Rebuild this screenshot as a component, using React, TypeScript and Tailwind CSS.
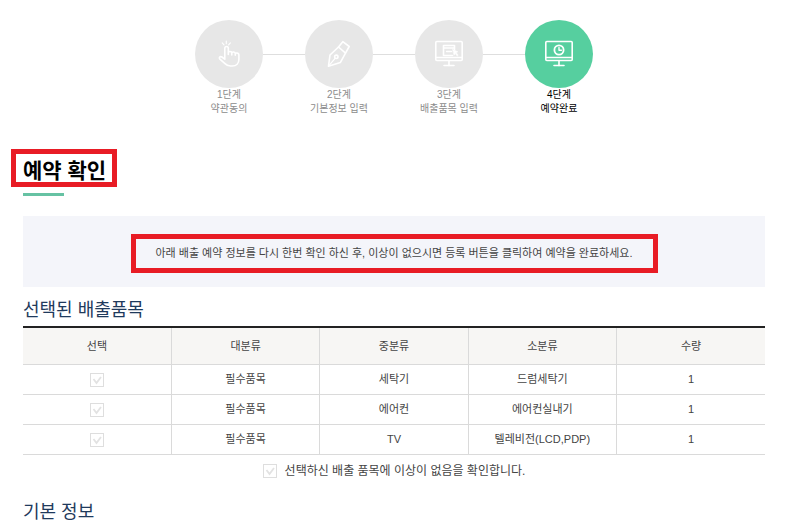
import type { ReactNode } from "react";

const steps = [
  { step: "1단계", label: "약관동의", icon: <TouchIcon /> },
  { step: "2단계", label: "기본정보 입력", icon: <PenIcon /> },
  { step: "3단계", label: "배출품목 입력", icon: <MonitorDocIcon /> },
  { step: "4단계", label: "예약완료", icon: <MonitorClockIcon />, active: true },
];

const columns = ["선택", "대분류", "중분류", "소분류", "수량"];

const items = [
  { large: "필수품목", middle: "세탁기", small: "드럼세탁기", count: 1 },
  { large: "필수품목", middle: "에어컨", small: "에어컨실내기", count: 1 },
  { large: "필수품목", middle: "TV", small: "텔레비전(LCD,PDP)", count: 1 },
];

function IconBase({ children }: { children: ReactNode }) {
  return (
    <svg
      className="h-[30px] w-[30px]"
      viewBox="0 0 30 30"
      fill="none"
      stroke="white"
      strokeWidth={1.6}
      strokeLinecap="round"
      strokeLinejoin="round"
      aria-hidden="true"
    >
      {children}
    </svg>
  );
}

function TouchIcon() {
  return (
    <IconBase>
      <path d="M12.3 2v2.8M8.2 3.8l1.8 2M16.4 3.8l-1.8 2" strokeWidth={1.1} />
      <path d="M10.8 20.2V9.2a1.6 1.6 0 0 1 3.5 0v6.3M14.3 13.6c0-1.6 3.5-1.6 3.5.3v2M17.8 13.9c.2-1.4 3.5-1.2 3.5.6v1.8M21.3 14.8c.5-1.2 3.6-.9 3.6 1v4.4c0 4-2.6 6.8-6.6 6.8h-1.8c-2.6 0-4.2-.9-5.8-2.6l-4.8-4.2c-1.5-1.6.3-3.2 2-2.2l2.9 2.2" />
    </IconBase>
  );
}

function PenIcon() {
  return (
    <IconBase>
      <path d="M4.5 27.2L6 16l8.5-8 7 6.2-5.2 9.4z" />
      <path d="M14.5 8l4.3-5.3 6.4 4.8-3.7 6.7" />
      <path d="M4.5 27.2l6.6-7.8" strokeWidth={1.2} />
      <circle cx="12.3" cy="17.8" r="1.7" />
    </IconBase>
  );
}

function MonitorDocIcon() {
  return (
    <IconBase>
      <rect x="1.8" y="2.5" width="26.4" height="19" rx="1" />
      <path d="M2 18.5h26M15 22v4.8M10 26.5h10" />
      <path d="M20.5 10.5v-4H9.5v10h9" />
      <path d="M9.5 9h11M12.5 12.5h5" strokeWidth={1.3} />
      <path
        d="M18.8 10.6l5 2.2-1.6.9 2 2.6-1 .8-2-2.6-1 1.4z"
        fill="white"
        strokeWidth={0.6}
      />
    </IconBase>
  );
}

function MonitorClockIcon() {
  return (
    <IconBase>
      <rect x="1.8" y="2.5" width="26.4" height="19" rx="1" />
      <path d="M2 18.5h26M15 22v4.8M10 26.5h10" />
      <circle cx="15" cy="11" r="4.6" strokeWidth={1.8} />
      <path d="M15 8.5v2.8h2.4" strokeWidth={1.4} />
    </IconBase>
  );
}

function CheckBox({ id, label }: { id: string; label?: string }) {
  return (
    <span className="inline-grid h-[14px] w-[14px] align-middle">
      <input
        type="checkbox"
        id={id}
        aria-label={label}
        defaultChecked
        disabled
        className="col-start-1 row-start-1 h-[14px] w-[14px] appearance-none border border-[#dedede] bg-white"
      />
      <svg
        className="pointer-events-none col-start-1 row-start-1 h-[14px] w-[14px]"
        viewBox="0 0 14 14"
        fill="none"
        stroke="#e2e2e2"
        strokeWidth={1.8}
        aria-hidden="true"
      >
        <path d="M3.5 6l3 4 4.5-6" />
      </svg>
    </span>
  );
}

export default function App() {
  return (
    <main className="bg-white pt-5 pr-[39px] pb-1 pl-[23px] font-['Liberation_Sans','Noto_Sans_CJK_KR',sans-serif] text-[11px] text-[#444]">
      <ol className="flex justify-center">
        {steps.map((s, i) => (
          <li
            key={s.step}
            className={`w-[110px] text-center text-[10px] leading-[14px] ${
              s.active ? "text-black" : "text-[#8c8c8c]"
            }`}
          >
            <div className="flex items-center">
              <span className={`h-px flex-1 ${i > 0 ? "bg-[#dedede]" : ""}`} />
              <span
                className={`flex h-[68px] w-[68px] items-center justify-center rounded-full ${
                  s.active ? "bg-[#56cf9f]" : "bg-[#e7e7e7]"
                }`}
              >
                {s.icon}
              </span>
              <span
                className={`h-px flex-1 ${
                  i < steps.length - 1 ? "bg-[#dedede]" : ""
                }`}
              />
            </div>
            <p>{s.step}</p>
            <p>{s.label}</p>
          </li>
        ))}
      </ol>

      {/* Page title */}
      <div className="mt-[33px] -ml-3 flex">
        <h1 className="border-[5px] border-[#e81c25] pt-1.5 pr-1.5 pl-[7px] text-[21px] leading-[22px] font-bold whitespace-nowrap text-black">
          예약 확인
        </h1>
      </div>
      <div className="mt-1.5 h-[3px] w-[41px] bg-[#66c2a3]" />

      <div className="mt-5 flex justify-center bg-[#f4f5fa] pt-[18px] pb-[14px]">
        <p className="border-[5px] border-[#e81c25] px-5 leading-[29px] whitespace-nowrap">
          아래 배출 예약 정보를 다시 한번 확인 하신 후, 이상이 없으시면 등록
          버튼을 클릭하여 예약을 완료하세요.
        </p>
      </div>

      <h2 className="mt-[11px] text-lg leading-6 text-[#1f3a5c]">
        선택된 배출품목
      </h2>
      <table className="mt-1 w-full table-fixed border-collapse border-t-2 border-[#222] text-center">
        <thead>
          <tr className="h-[37px] bg-[#f7f6f4]">
            {columns.map((name) => (
              <th
                key={name}
                scope="col"
                className="border-r border-b border-[#dadada] p-0 font-normal last:border-r-0"
              >
                {name}
              </th>
            ))}
          </tr>
        </thead>
        <tbody>
          {items.map((item, i) => (
            <tr
              key={item.small}
              className="h-[30px] *:border-r *:border-b *:border-[#dadada] *:p-0 *:last:border-r-0"
            >
              <td>
                <CheckBox id={`item-${i}`} label={`${item.small} 선택`} />
              </td>
              <td>{item.large}</td>
              <td>{item.middle}</td>
              <td>{item.small}</td>
              <td>{item.count}</td>
            </tr>
          ))}
        </tbody>
      </table>

      <div className="mt-1.5 flex items-center justify-center gap-2">
        <CheckBox id="confirm" />
        <label htmlFor="confirm" className="text-xs leading-5">
          선택하신 배출 품목에 이상이 없음을 확인합니다.
        </label>
      </div>

      <h2 className="mt-[19px] text-lg leading-6 text-[#1f3a5c]">기본 정보</h2>
    </main>
  );
}
